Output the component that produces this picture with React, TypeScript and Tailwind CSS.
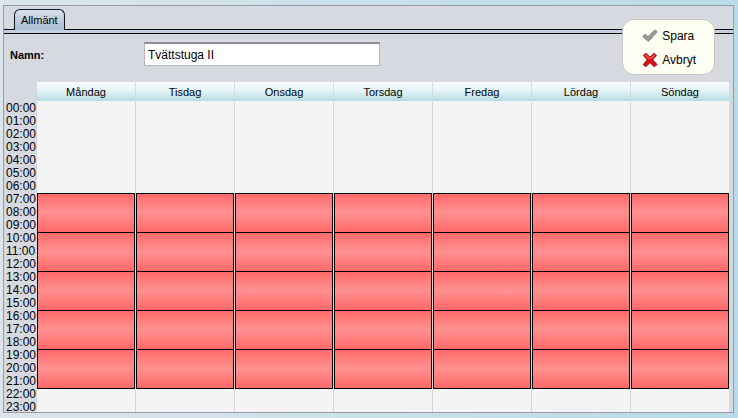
import { useState } from "react";

const days = ["Måndag", "Tisdag", "Onsdag", "Torsdag", "Fredag", "Lördag", "Söndag"];
const hours = Array.from({ length: 24 }, (_, h) => h);
const passStarts = [7, 10, 13, 16, 19];
const firstBooked = 7;
const lastBooked = 21;

function CheckIcon() {
  return (
    <svg width="16" height="16" viewBox="0 0 16 16" aria-hidden="true">
      <path d="M0.6 8.6 3 6 6 8.6 12.8 1.8 15.4 3.8 6.4 13.6Z" fill="#929292" stroke="#868686" strokeWidth="0.8" strokeLinejoin="round" />
      <path d="M2 8 6.1 11 13.6 3.4" fill="none" stroke="#a3a3a3" strokeWidth="1" />
    </svg>
  );
}

function CrossIcon() {
  return (
    <svg width="16" height="16" viewBox="0 0 16 16" aria-hidden="true">
      <path
        d="M1.2 3.2 4 1.2 8 5 12 1.2 14.6 3.4 10.8 7.8 15.2 12.6 12.2 14.8 8 10.8 3.8 14.8 1 12.8 5 7.8Z"
        fill="#cf1216"
        stroke="#a80f12"
        strokeWidth="0.8"
        strokeLinejoin="round"
      />
      <path d="M2.4 3.2 4 2.2 8 6 12 2.2 13.4 3.3 10.6 6.2 8 7.2 5.4 6.2Z" fill="#e65050" />
    </svg>
  );
}

function Actions() {
  return (
    <div className="absolute top-[13px] right-[18px] flex flex-col gap-2 rounded-xl border border-[#c6c6c4] bg-[#fffff3] pt-2 pr-[18px] pb-1.5 pl-[19px] text-xs">
      <button type="button" className="flex h-4 items-center gap-1">
        <CheckIcon />
        <span>Spara</span>
      </button>
      <button type="button" className="flex h-4 items-center gap-1">
        <CrossIcon />
        <span>Avbryt</span>
      </button>
    </div>
  );
}

function Schedule() {
  return (
    <table className="w-full table-fixed border-separate border-spacing-0">
      <colgroup>
        <col className="w-[31px]" />
        {days.map((day) => (
          <col key={day} />
        ))}
      </colgroup>
      <thead>
        <tr className="h-5">
          <td className="p-0" />
          {days.map((day) => (
            <th
              key={day}
              scope="col"
              className="border-r border-b border-r-[#d3dde0] border-b-[#f4f4f4] bg-linear-to-b from-[#fafdfd] via-[#e2f3f6] to-[#b4dbe5] bg-clip-padding p-0 text-[11px] leading-[18px] font-normal last:border-r-transparent"
            >
              {day}
            </th>
          ))}
        </tr>
      </thead>
      <tbody>
        {hours.map((hour) => (
          <tr key={hour} className="h-[13px]">
            <th scope="row" className="p-0 text-left text-xs leading-[13px] font-normal">
              {String(hour).padStart(2, "0")}:00
            </th>
            {hour < firstBooked || hour > lastBooked
              ? days.map((day) => (
                  <td
                    key={day}
                    className={
                      hour === lastBooked + 1
                        ? "border-r border-[#d6d6d6] bg-[#f4f4f4] bg-clip-padding p-0 align-top last:border-r-transparent"
                        : "border-r border-[#d6d6d6] bg-[#f4f4f4] bg-clip-padding p-0 last:border-r-transparent"
                    }
                  >
                    {hour === lastBooked + 1 && <div className="h-px bg-black" />}
                  </td>
                ))
              : passStarts.includes(hour) &&
                days.map((day) => (
                  <td key={day} rowSpan={3} className="border-r border-[#d6d6d6] bg-[#f4f4f4] bg-clip-padding p-0 last:border-r-transparent">
                    <div className="h-[39px] border-x border-t border-black bg-linear-to-b from-[#ff6868] via-[#ff9090] to-[#ff6868] bg-origin-border" />
                  </td>
                ))}
          </tr>
        ))}
      </tbody>
    </table>
  );
}

export default function App() {
  const [name, setName] = useState("Tvättstuga II");

  return (
    <div className="h-screen bg-linear-to-r from-[#dce5ec] to-[#b7dce7] pt-[5px] pr-1 pb-[5px] pl-[3px] font-['Liberation_Sans',Arial,sans-serif] text-black">
      <main className="relative h-full overflow-hidden border border-[#9999a8] bg-[#d6d9e0]">
        <nav className="pt-[3px]">
          <div className="flex h-[21px] border-b border-black pl-[10px]">
            <button
              type="button"
              className="h-[21px] rounded-t-md border border-b-0 border-[#101522] bg-linear-to-b from-[#d9dfe9] to-[#a6bed1] px-1.5 text-[11px]"
            >
              Allmänt
            </button>
          </div>
          <div className="h-1 border-b border-black bg-[#c4cfe2]" />
        </nav>

        <div className="flex h-[48px] items-start pt-2 pl-[6px]">
          <label htmlFor="name" className="w-[134px] text-[11px] leading-[26px] font-bold">
            Namn:
          </label>
          <input
            id="name"
            type="text"
            value={name}
            onChange={(event) => setName(event.target.value)}
            className="h-6 w-[236px] border border-t-2 border-[#b4b4b8] border-t-[#8e8e94] bg-white px-[3px] text-xs outline-none"
          />
        </div>

        <div className="pr-[3px] pl-[2px]">
          <Schedule />
        </div>

        <Actions />
      </main>
    </div>
  );
}
